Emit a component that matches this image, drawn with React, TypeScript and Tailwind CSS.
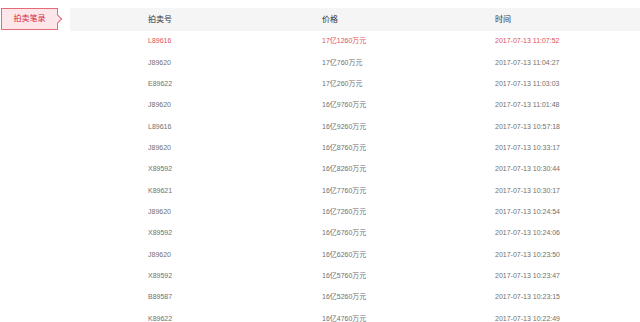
const rows = [
  ['L89616', '17亿1260万元', '2017-07-13 11:07:52'],
  ['J89620', '17亿760万元', '2017-07-13 11:04:27'],
  ['E89622', '17亿260万元', '2017-07-13 11:03:03'],
  ['J89620', '16亿9760万元', '2017-07-13 11:01:48'],
  ['L89616', '16亿9260万元', '2017-07-13 10:57:18'],
  ['J89620', '16亿8760万元', '2017-07-13 10:33:17'],
  ['X89592', '16亿8260万元', '2017-07-13 10:30:44'],
  ['K89621', '16亿7760万元', '2017-07-13 10:30:17'],
  ['J89620', '16亿7260万元', '2017-07-13 10:24:54'],
  ['X89592', '16亿6760万元', '2017-07-13 10:24:06'],
  ['J89620', '16亿6260万元', '2017-07-13 10:23:50'],
  ['X89592', '16亿5760万元', '2017-07-13 10:23:47'],
  ['B89587', '16亿5260万元', '2017-07-13 10:23:15'],
  ['K89622', '16亿4760万元', '2017-07-13 10:22:49'],
]

export default function App() {
  return (
    <div
      className="w-[640px] h-[322px] overflow-hidden bg-white flex items-start pt-[8px]"
      style={{ fontFamily: '"Liberation Sans", "Noto Sans CJK SC", sans-serif' }}
    >
      {/* left tag */}
      <div className="w-[70px] shrink-0 pl-[1px]">
        <div className="relative w-[57px] h-[22px] border border-[#e66a78] bg-[#fde6ea] flex items-center justify-center text-[8px] text-[#d42a3c]">
          拍卖笔录
          <div className="absolute right-[-4px] top-[7px] w-[6px] h-[6px] rotate-45 bg-[#fde6ea] border-t border-r border-[#e66a78]" />
        </div>
      </div>

      {/* table */}
      <div className="flex-1 flex flex-col">
        <div className="h-[23px] shrink-0 bg-[#f5f5f5] grid grid-cols-[174px_173px_1fr] items-center pl-[78px] text-[8px] text-[#333]">
          <div>拍卖号</div>
          <div>价格</div>
          <div>时间</div>
        </div>
        {rows.map((r, i) => (
          <div
            key={i}
            className={`h-[21.33px] shrink-0 grid grid-cols-[174px_173px_1fr] items-center pl-[78px] text-[7px] ${
              i === 0 ? 'text-[#e0505e]' : 'text-[#707070]'
            }`}
          >
            <div>{r[0]}</div>
            <div>{r[1]}</div>
            <div>{r[2]}</div>
          </div>
        ))}
      </div>
    </div>
  )
}
